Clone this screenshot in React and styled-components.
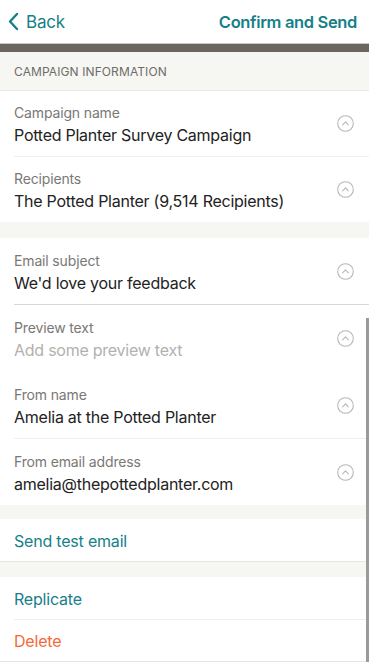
import React from "react";
import styled, { createGlobalStyle } from "styled-components";

const Global = createGlobalStyle`
  html, body { margin: 0; padding: 0; background: #ffffff; }
  body { font-family: Inter, "Noto Sans", "Liberation Sans", sans-serif; -webkit-font-smoothing: antialiased; }
  * { box-sizing: border-box; }
`;

const Screen = styled.div`
  position: relative;
  width: 369px;
  height: 662px;
  overflow: hidden;
  background: #f6f6f2;
  display: flex;
  flex-direction: column;
`;

const NavBar = styled.div`
  height: 44px;
  background: #ffffff;
  border-bottom: 1px solid #c9c7c3;
  display: flex;
  align-items: center;
  justify-content: space-between;
  padding: 0 12px 0 8px;
  flex-shrink: 0;
`;

const NavButton = styled.button`
  border: 0;
  background: none;
  padding: 0;
  display: flex;
  align-items: center;
  gap: 7px;
  color: #167f89;
  font-family: inherit;
  font-size: ${(p) => (p.$strong ? "16.5px" : "17px")};
  font-weight: ${(p) => (p.$strong ? 600 : 400)};
  letter-spacing: ${(p) => (p.$strong ? "-0.35px" : "-0.2px")};
`;

const Band = styled.div`
  height: 8px;
  background: #6b6660;
  flex-shrink: 0;
`;

const SectionHeader = styled.div`
  height: 39px;
  display: flex;
  align-items: center;
  padding: 1px 14px 0;
  color: #6e6c69;
  font-size: 12px;
  letter-spacing: 0.1px;
  text-transform: uppercase;
  border-bottom: 1px solid #ebeae6;
  flex-shrink: 0;
`;

const Group = styled.div`
  background: #ffffff;
  padding-left: 14px;
  border-bottom: ${(p) => (p.$bordered ? "1px solid #e6e5e1" : "0")};
  margin-bottom: ${(p) => p.$gap || 0}px;
  flex-shrink: 0;
`;

const FieldRow = styled.div`
  height: ${(p) => p.$h || 66}px;
  display: flex;
  align-items: center;
  padding-right: 15px;
  border-bottom: ${(p) =>
    p.$sep === "strong" ? "1px solid #d9d8d5" : p.$sep ? "1px solid #f0efec" : "0"};
`;

const FieldText = styled.div`
  flex: 1;
  display: flex;
  flex-direction: column;
  gap: 4px;
  padding-top: 2px;
`;

const Label = styled.div`
  font-size: 14px;
  color: #7a7875;
  line-height: 17px;
  letter-spacing: -0.15px;
`;

const Value = styled.div`
  font-size: 16px;
  color: ${(p) => (p.$placeholder ? "#b3b1ae" : "#222222")};
  line-height: 20px;
  letter-spacing: -0.25px;
`;

const ActionRow = styled.div`
  height: ${(p) => p.$h || 42}px;
  display: flex;
  align-items: center;
  padding-top: 1px;
  font-size: 16px;
  letter-spacing: -0.2px;
  color: ${(p) => (p.$danger ? "#f26a3a" : "#167f89")};
  border-bottom: ${(p) => (p.$sep ? "1px solid #f0efec" : "0")};
`;

const ScrollIndicator = styled.div`
  position: absolute;
  right: 0;
  top: 318px;
  width: 3px;
  height: 344px;
  background: #9b9a98;
`;

const ChevronCircle = () => (
  <svg width="17" height="17" viewBox="0 0 17 17" fill="none">
    <circle cx="8.5" cy="8.5" r="7.8" stroke="#b8b7b4" strokeWidth="1.1" />
    <path d="M5.6 9.8 L8.5 6.9 L11.4 9.8" stroke="#b8b7b4" strokeWidth="1.1" strokeLinecap="round" strokeLinejoin="round" />
  </svg>
);

const BackChevron = () => (
  <svg width="11" height="19" viewBox="0 0 11 19" fill="none">
    <path d="M9 2 L2 9.5 L9 17" stroke="#167f89" strokeWidth="2.4" strokeLinecap="round" strokeLinejoin="round" />
  </svg>
);

const Field = ({ label, value, placeholder, sep, h }) => (
  <FieldRow $sep={sep} $h={h}>
    <FieldText>
      <Label>{label}</Label>
      <Value $placeholder={placeholder}>{value}</Value>
    </FieldText>
    <ChevronCircle />
  </FieldRow>
);

export default function App() {
  return (
    <>
      <Global />
      <Screen>
        <NavBar>
          <NavButton>
            <BackChevron />
            Back
          </NavButton>
          <NavButton $strong>Confirm and Send</NavButton>
        </NavBar>
        <Band />
        <SectionHeader>Campaign information</SectionHeader>
        <Group $gap={16}>
          <Field label="Campaign name" value="Potted Planter Survey Campaign" sep h={66} />
          <Field label="Recipients" value="The Potted Planter (9,514 Recipients)" h={65} />
        </Group>
        <Group $gap={14}>
          <Field label="Email subject" value="We'd love your feedback" sep="strong" h={67} />
          <Field label="Preview text" value="Add some preview text" placeholder h={67} />
          <Field label="From name" value="Amelia at the Potted Planter" sep h={67} />
          <Field label="From email address" value="amelia@thepottedplanter.com" h={66} />
        </Group>
        <Group $bordered $gap={15}>
          <ActionRow $h={42}>Send test email</ActionRow>
        </Group>
        <Group $bordered>
          <ActionRow $sep $h={43}>Replicate</ActionRow>
          <ActionRow $danger $h={41}>Delete</ActionRow>
        </Group>
        <ScrollIndicator />
      </Screen>
    </>
  );
}
